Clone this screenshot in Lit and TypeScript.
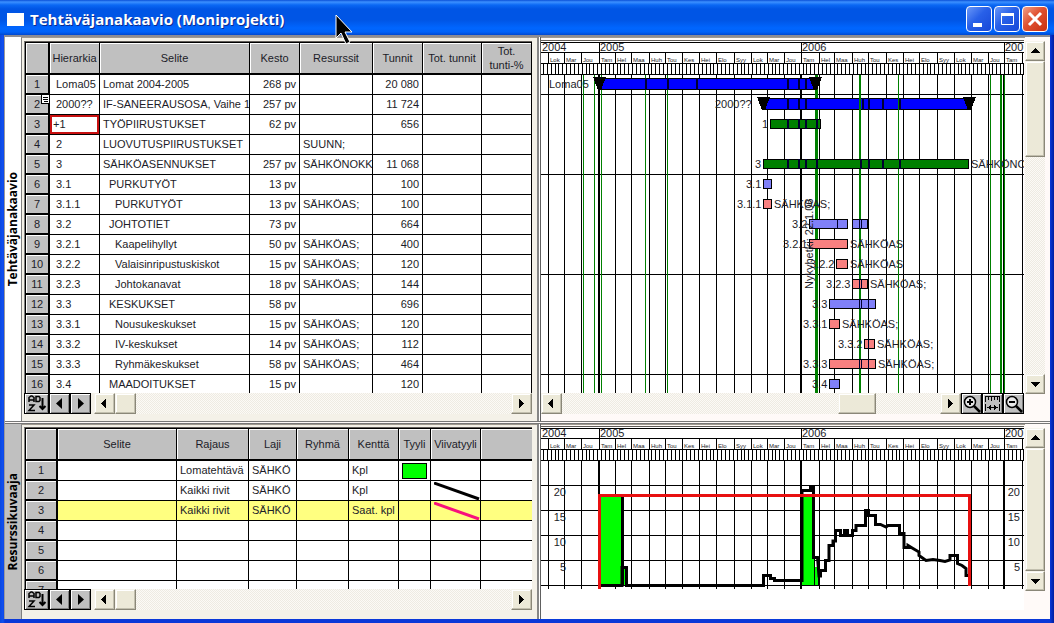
import { LitElement, html, svg, css, nothing } from "lit";
import { customElement, property } from "lit/decorators.js";
import { classMap } from "lit/directives/class-map.js";

/** Pixel column where the timeline canvas starts; chart data is stored on the same scale. */
const ORIGIN = 541;
const MONTH_LINES = [
  548, 564, 581, 599, 615, 631, 649, 665, 682, 699, 716, 734, 751, 767, 784, 801,
  819, 834, 852, 868, 886, 903, 919, 937, 954, 971, 988, 1004, 1022,
].map((x) => x - ORIGIN);
const MONTH_NAMES = ["Tam", "Hel", "Maa", "Huh", "Tou", "Kes", "Hei", "Elo", "Syy", "Lok", "Mar", "Jou"];
const YEARS = [
  { x: 0, label: "2004" },
  { x: 599 - ORIGIN, label: "2005" },
  { x: 801 - ORIGIN, label: "2006" },
  { x: 1004 - ORIGIN, label: "200" },
];
const WEEKS = Array.from({ length: 126 }, (_, i) => Math.round(2 + i * 3.874));

/** [x, width] of holiday markers. */
const HOLIDAYS: [number, number][] = [
  [583, 1], [594, 1], [601, 1], [645, 1], [667, 1], [815, 3], [859, 2], [898, 1], [990, 1], [1000, 2], [1004, 1],
];

type Task = [id: string, indent: number, name: string, duration: string, resource: string, hours: string];
const TASKS: Task[] = [
  ["Loma05", 0, "Lomat 2004-2005", "268 pv", "", "20 080"],
  ["2000??", 0, "IF-SANEERAUSOSA, Vaihe 1", "257 pv", "", "11 724"],
  ["+1", 0, "TYÖPIIRUSTUKSET", "62 pv", "", "656"],
  ["2", 0, "LUOVUTUSPIIRUSTUKSET", "", "SUUNN;", ""],
  ["3", 0, "SÄHKÖASENNUKSET", "257 pv", "SÄHKÖNOKK", "11 068"],
  ["3.1", 1, "PURKUTYÖT", "13 pv", "", "100"],
  ["3.1.1", 2, "PURKUTYÖT", "13 pv", "SÄHKÖAS;", "100"],
  ["3.2", 1, "JOHTOTIET", "73 pv", "", "664"],
  ["3.2.1", 2, "Kaapelihyllyt", "50 pv", "SÄHKÖAS;", "400"],
  ["3.2.2", 2, "Valaisinripustuskiskot", "15 pv", "SÄHKÖAS;", "120"],
  ["3.2.3", 2, "Johtokanavat", "18 pv", "SÄHKÖAS;", "144"],
  ["3.3", 1, "KESKUKSET", "58 pv", "", "696"],
  ["3.3.1", 2, "Nousukeskukset", "15 pv", "SÄHKÖAS;", "120"],
  ["3.3.2", 2, "IV-keskukset", "14 pv", "SÄHKÖAS;", "112"],
  ["3.3.3", 2, "Ryhmäkeskukset", "58 pv", "SÄHKÖAS;", "464"],
  ["3.4", 1, "MAADOITUKSET", "15 pv", "", "120"],
];

interface Bar {
  row: number;
  kind: "project" | "phase" | "summary" | "work";
  spans: [number, number][];
  ticks?: number[];
  label: string;
  labelX: number;
  after?: string;
}
const BARS: Bar[] = [
  { row: 1, kind: "project", spans: [[599, 815]], ticks: [645, 667, 696, 787, 798, 805], label: "Loma05", labelX: 549 },
  { row: 2, kind: "project", spans: [[763, 969]], ticks: [787, 798, 805, 862, 868, 882, 899], label: "2000??", labelX: 715 },
  { row: 3, kind: "phase", spans: [[770, 821]], ticks: [787, 798, 805, 816], label: "1", labelX: 762 },
  { row: 5, kind: "phase", spans: [[763, 969]], ticks: [787, 798, 805, 816, 860, 868, 882, 899], label: "3", labelX: 755, after: "SÄHKÖNO" },
  { row: 6, kind: "summary", spans: [[763, 772]], label: "3.1", labelX: 746 },
  { row: 7, kind: "work", spans: [[763, 772]], label: "3.1.1", labelX: 737, after: "SÄHKÖAS;" },
  { row: 8, kind: "summary", spans: [[809, 848], [852, 868]], ticks: [837, 859, 861], label: "3.2", labelX: 792 },
  { row: 9, kind: "work", spans: [[809, 848]], label: "3.2.1", labelX: 783, after: "SÄHKÖAS" },
  { row: 10, kind: "work", spans: [[836, 848]], label: "3.2.2", labelX: 810, after: "SÄHKÖAS" },
  { row: 11, kind: "work", spans: [[852, 868]], ticks: [859, 861], label: "3.2.3", labelX: 826, after: "SÄHKÖAS;" },
  { row: 12, kind: "summary", spans: [[829, 876]], ticks: [859, 861, 868], label: "3.3", labelX: 812 },
  { row: 13, kind: "work", spans: [[829, 840]], label: "3.3.1", labelX: 803, after: "SÄHKÖAS;" },
  { row: 14, kind: "work", spans: [[864, 875]], ticks: [868], label: "3.3.2", labelX: 838, after: "SÄHKÖAS;" },
  { row: 15, kind: "work", spans: [[829, 876]], ticks: [859, 861, 868], label: "3.3.3", labelX: 803, after: "SÄHKÖAS;" },
  { row: 16, kind: "summary", spans: [[829, 840]], label: "3.4", labelX: 812 },
];
const FILLS = { project: "#0000ff", phase: "#008000", summary: "#8080f8", work: "#f88080" };

const RESOURCE_ROWS = [
  ["Lomatehtävä", "SÄHKÖ", "Kpl", "fill"],
  ["Kaikki rivit", "SÄHKÖ", "Kpl", "black"],
  ["Kaikki rivit", "SÄHKÖ", "Saat. kpl", "pink"],
  ["", "", "", ""],
  ["", "", "", ""],
  ["", "", "", ""],
  ["", "", "", ""],
];

const controls = css`
  button {
    box-sizing: border-box;
    display: flex;
    align-items: center;
    justify-content: center;
    margin: 0;
    padding: 0;
    border: 0;
    font: inherit;
  }
`;

@customElement("scroll-bar")
class ScrollBar extends LitElement {
  @property({ type: Boolean, reflect: true }) vertical = false;
  @property({ type: Number }) before = 0;
  @property({ type: Number }) size = 20;

  static styles = [
    controls,
    css`
      :host {
        display: flex;
        min-width: 0;
        min-height: 0;
        background: repeating-conic-gradient(#eeebe2 0 25%, #fcfaf6 0 50%) 0 0 / 2px 2px;
      }
      :host([vertical]) {
        flex-direction: column;
      }
      .arrow,
      .thumb {
        flex: none;
        box-sizing: border-box;
        background: #ece9d8;
        border: 1px solid;
        border-color: #f6f4ec #8a8778 #8a8778 #f6f4ec;
        box-shadow: inset -1px -1px #c2bfae, inset 1px 1px #fff;
      }
      .arrow {
        width: 21px;
        height: 21px;
      }
      .track {
        display: flex;
        flex: 1;
        min-width: 0;
        min-height: 0;
      }
      :host([vertical]) .arrow {
        width: 20px;
        height: 20px;
      }
      :host([vertical]) .track {
        flex-direction: column;
      }
    `,
  ];

  render() {
    const dim = this.vertical ? "height" : "width";
    const paths = this.vertical ? ["M0 6h9L4.500 1z", "M0 2h9L4.500 7z"] : ["M6 0v9L1 4.500z", "M2 0v9L7 4.500z"];
    const arrow = (i: number, name: string) => html`<button class="arrow" aria-label=${name}>
      <svg width="9" height="9" shape-rendering="crispEdges"><path d=${paths[i]} /></svg>
    </button>`;
    return html`${arrow(0, "Takaisin")}
      <div class="track">
        <div style="${dim}:${this.before}%"></div>
        <div class="thumb" style="${dim}:${this.size}px"></div>
      </div>
      ${arrow(1, "Eteenpäin")}`;
  }
}

const timeHeader = () => svg`
  <g class="ink">
    <path d="M0 1.500H2000M0 11.500H2000M0 22.500H2000M0 33.500H2000" />
    ${WEEKS.map((x) => svg`<path d="M${x + 0.5} 22V33" />`)}
    ${MONTH_LINES.map((x) => svg`<path d="M${x + 0.5} 11V22" />`)}
    ${YEARS.slice(1).map((y) => svg`<path d="M${y.x + 0.5} 1V22" />`)}
  </g>
  ${YEARS.map((y) => svg`<text class="year" x=${y.x + 1} y="10">${y.label}</text>`)}
  ${MONTH_LINES.map((x, i) => svg`<text class="month" x=${x + 2} y="21">${MONTH_NAMES[(i + 9) % 12]}</text>`)}
`;

const chartStyles = css`
  :host {
    display: block;
    overflow: hidden;
    background: #fff;
  }
  svg {
    display: block;
    width: 100%;
    height: 100%;
  }
  text {
    font: 11px "Liberation Sans", Arial, sans-serif;
    fill: #1c1c28;
  }
  .year {
    font-size: 11px;
  }
  .month {
    font-size: 6px;
  }
  .ink {
    stroke: #000;
    fill: none;
    shape-rendering: crispEdges;
  }
  .shape {
    shape-rendering: crispEdges;
  }
`;

@customElement("gantt-chart")
class GanttChart extends LitElement {
  static styles = chartStyles;

  private bar(b: Bar) {
    const mid = b.row * 20 + 23;
    const half = b.kind === "project" ? 6 : 5;
    const end = b.spans[b.spans.length - 1][1] - ORIGIN;
    const start = b.spans[0][0] - ORIGIN;
    const flag = (x: number) => svg`<path d="M${x - 6} ${mid - 7}h13l-5 13h-3z" />`;
    return svg`
      <text x=${b.labelX - ORIGIN} y=${mid + 4}>${b.label}</text>
      <g class="shape">
        ${b.spans.map(([a, z]) => svg`<rect x=${a - ORIGIN + 0.5} y=${mid - half + 0.5} width=${z - a - 1} height=${half * 2 - 1} fill=${FILLS[b.kind]} stroke="#000" />`)}
        ${(b.ticks ?? []).map((t) => svg`<rect x=${t - ORIGIN} y=${mid - half} width=${half === 5 && b.kind !== "phase" ? 1 : 2} height=${half * 2} fill="#000030" />`)}
        ${b.kind === "project" ? [flag(start), flag(end)] : nothing}
      </g>
      ${b.after ? svg`<text x=${end + 2} y=${mid + 4}>${b.after}</text>` : nothing}
    `;
  }

  render() {
    return html`<svg role="img" aria-label="Tehtäväjanakaavio">
      <g class="ink">
        ${MONTH_LINES.map((x) => svg`<path d="M${x + 0.5} 33V2000" />`)}
        ${YEARS.slice(1).map((y) => svg`<path d="M${y.x} 33V2000" stroke-width="2" />`)}
        ${[53, 133, 233, 333].map((y) => svg`<path d="M0 ${y + 0.5}H2000" />`)}
      </g>
      <g class="shape">
        ${HOLIDAYS.map(([x, w]) => svg`<rect x=${x - ORIGIN} y="34" width=${w} height="2000" fill="#008000" />`)}
      </g>
      ${BARS.map((b) => this.bar(b))}
      <text transform="translate(272 248) rotate(-90)">Nykyhetki: 22.1.06</text>
      <g class="shape">
        <rect x="318" y="57" width="2" height="12" fill="#008000" />
        <rect x="357" y="57" width="1" height="12" fill="#008000" />
      </g>
      ${timeHeader()}
    </svg>`;
  }
}

/** Resource load curve, one vertex per change. */
const LOAD =
  "M601 585.500H622V567.500H626.500V585.500H763.500V575.500H770.500V578.500H774.500V580.500H802V490.500H810.500V486.500H813.500V557.500H817.500L819 576H820.500V570.500H825.500V560.500H829V545.500H833V541H835.500V530.500H840.500V535.500H844.500V530.500H847.500V535.500H852.500V530.500H856V525.500H865.500V510.500H868.500V515.500H875.500V524.500H880.500L886 527L888 525.500H899.500V533.500H904V547.500H908V545.500L913 548.500L919 552V555.500L926 560.500L933 559.500L940 560.500L945 561.500L950 560V555.500H957.500V563.500L962 565.500L966 568.500V575.500H969";

@customElement("load-chart")
class LoadChart extends LitElement {
  static styles = [
    chartStyles,
    css`
      .limit {
        fill: none;
        stroke: #e81010;
        stroke-width: 3;
      }
      .curve {
        fill: none;
        stroke: #000;
        stroke-width: 3;
      }
      .scale {
        text-anchor: end;
      }
    `,
  ];

  render() {
    return html`<svg role="img" aria-label="Resurssikuvaaja">
      <g class="ink">
        ${MONTH_LINES.map((x) => svg`<path d="M${x + 0.5} 33V162" />`)}
        ${YEARS.slice(1).map((y) => svg`<path d="M${y.x} 33V162" stroke-width="2" />`)}
        ${[58, 83, 108, 133, 158].map((y) => svg`<path d="M0 ${y + 0.5}H2000" />`)}
      </g>
      <g class="shape" transform="translate(-541 -427)">
        <path d="M600 495h22v90h-22zM802 495h12v90h-12zM814 567h4v18h-4zM623 569h3v16h-3z" fill="#00ff00" />
        <path d="M600 585.500H627M802 585.500H819M814.500 495V585M818.500 567V585" stroke="#000" fill="none" />
        <path d="M622.500 495V586" stroke="#000" stroke-width="3" />
        <path class="limit" d="M599.500 589V495.500H969.500V586" />
      </g>
      <path class="curve" transform="translate(-541 -427)" d=${LOAD} />
      <path class="limit shape" transform="translate(-541 -427)" d="M601 495.500H969.500V586" />
      ${[20, 15, 10, 5].map(
        (n, i) => svg`
          <text class="scale" x="25" y=${69 + i * 25}>${n}</text>
          <text class="scale" x="479" y=${69 + i * 25}>${n}</text>`,
      )}
      ${timeHeader()}
    </svg>`;
  }
}

const magnifier = (plus: boolean) => svg`
  <circle cx="7" cy="7" r="5.500" fill="#e8e8e8" stroke="#000" stroke-width="1.500" />
  <path d="M4 7h6" stroke="#000" stroke-width="2" />
  ${plus ? svg`<path d="M7 4v6" stroke="#000" stroke-width="2" />` : nothing}
  <path d="M11 11l6 6" stroke="#000" stroke-width="2.500" />
`;

@customElement("app-root")
class AppRoot extends LitElement {
  static styles = [
    controls,
    css`
      :host {
        display: block;
        font: 11px/14px "Liberation Sans", Arial, sans-serif;
        color: #1c1c28;
      }
      .window {
        display: flex;
        flex-direction: column;
        box-sizing: border-box;
        height: 100vh;
        padding: 0 4px 4px;
        background: linear-gradient(90deg, #0a48e0, #1050f0 3px, #0a38d8 5px, #0a38d8 calc(100% - 4px), #001ea0);
        overflow: hidden;
        position: relative;
      }
      .titlebar {
        flex: none;
        display: flex;
        align-items: center;
        box-sizing: border-box;
        height: 35px;
        margin: 0 -4px;
        padding: 3px 6px 0 7px;
        gap: 6px;
        background: linear-gradient(#0a50d8 0, #3c90ff 2px, #0a68f4 5px, #0055e5 9px, #0055e5 20px, #0066ff 28px, #0062f8 32px, #0048d0 35px);
      }
      .app-icon {
        width: 17px;
        height: 13px;
        background: #fff;
      }
      h1 {
        flex: 1;
        margin: 0;
        font: bold 15px/20px "Open Sans", sans-serif;
        color: #fff;
        text-shadow: 1px 1px #0a2a90;
      }
      .captions {
        display: flex;
        gap: 2px;
      }
      .caption {
        width: 26px;
        height: 26px;
        border: 1px solid #fff;
        border-radius: 4px;
        background: linear-gradient(135deg, #6a98f8, #2860e8 45%, #1848d8);
      }
      .caption.close {
        background: linear-gradient(135deg, #f0a088, #e05030 45%, #c83010);
      }
      .client {
        flex: 1;
        display: flex;
        flex-direction: column;
        min-height: 0;
        box-sizing: border-box;
        border-top: 2px solid #8c8c94;
        border-left: 1px solid #9a9a9a;
        background: #fffaf8;
      }
      .pane {
        display: grid;
        grid-template-columns: 16px 516px 4px minmax(0, 1fr) 21px;
        padding-right: 4px;
        min-height: 0;
      }
      .pane.tasks {
        flex: 1;
      }
      .pane.resources {
        flex: none;
        height: 195px;
        border-top: 3px double #777;
      }
      .side {
        display: flex;
        align-items: center;
        justify-content: center;
        margin: 0;
        background: #fff;
        font: bold 12px/16px "Open Sans", sans-serif;
        color: #000;
      }
      .side span {
        writing-mode: vertical-rl;
        transform: rotate(180deg);
      }
      .resources .side {
        background: #c0c0c0;
      }
      .sheet {
        display: flex;
        flex-direction: column;
        min-height: 0;
        box-sizing: border-box;
        border-left: 1px solid #808080;
        border-top: 1px solid #a09a90;
        padding: 3px 5px 7px 2px;
        background: #f4f1e8;
      }
      .resources .sheet {
        padding: 2px 5px 9px 2px;
      }
      .grid {
        flex: 1;
        min-height: 0;
        overflow: hidden;
        background: #fff;
        border-left: 1px solid #808080;
        border-top: 1px solid #605c58;
      }
      .split {
        border-left: 2px solid #868686;
        border-right: 1px solid #606060;
        background: #fff;
      }
      .chart {
        display: flex;
        flex-direction: column;
        min-height: 0;
        box-sizing: border-box;
        padding: 2px 1px 7px 0;
        border-top: 1px solid #a09a90;
      }
      .resources .chart {
        padding: 1px 1px 9px 0;
      }
      .canvas {
        flex: 1;
        min-height: 0;
        border-top: 1px solid #605c58;
      }
      .resources .canvas {
        border-bottom: 21px solid #fff;
      }
      .vbar {
        padding: 4px 0 27px;
        display: flex;
      }
      .resources .vbar {
        padding: 4px 0 28px;
      }
      .row {
        flex: none;
        display: flex;
        height: 21px;
      }
      .row scroll-bar {
        flex: 1;
      }
      .tool {
        flex: none;
        width: 21px;
        height: 21px;
        background: #c0c0c0;
        border: 1px solid #000;
        box-shadow: inset 1px 1px #fff, inset -1px -1px #808080;
      }
      .tool.sort {
        width: 25px;
      }
      .row .nav + scroll-bar {
        margin-left: 3px;
      }
      table {
        table-layout: fixed;
        border-collapse: separate;
        border-spacing: 0;
        width: 507px;
      }
      th,
      td {
        box-sizing: border-box;
        height: 20px;
        padding: 0 3px 2px;
        border-right: 1px solid #000;
        border-bottom: 1px solid #000;
        font-weight: normal;
        white-space: nowrap;
        overflow: hidden;
        text-align: left;
      }
      th {
        padding-bottom: 0;
        background: #c0c0c0;
        text-align: center;
        box-shadow: inset 1px 1px #fff;
      }
      thead th {
        height: 33px;
        padding: 0;
        border-top: 1px solid #000;
        border-bottom-width: 2px;
        white-space: normal;
      }
      th:first-child {
        border-left: 1px solid #000;
        border-right-width: 2px;
        border-bottom-width: 2px;
      }
      .num {
        text-align: right;
      }
      .code {
        padding-left: 6px;
      }
      .indent-1 {
        padding-left: 9px;
      }
      .indent-2 {
        padding-left: 15px;
      }
      .edit {
        padding: 0;
      }
      .edit input {
        display: block;
        box-sizing: border-box;
        width: 100%;
        height: 19px;
        margin: 0;
        padding: 0 1px 2px;
        border: 2px solid #c81010;
        border-radius: 0;
        outline: 0;
        background: #fff;
        color: inherit;
        font: inherit;
      }
      .selected td {
        background: #ffff80;
      }
      .blank-end {
        border-right: 0;
      }
      .drawn {
        padding: 0 0 0 3px;
      }
      .swatch {
        display: block;
        width: 23px;
        height: 14px;
        border: 1px solid #000;
        background: #00ff00;
      }
      .drawn svg {
        display: block;
      }
      .note {
        position: absolute;
        left: 41px;
        top: 94px;
      }
      .cursor {
        position: absolute;
        left: 334px;
        top: 13px;
      }
    `,
  ];

  private widths(list: number[]) {
    return html`<colgroup>
      ${list.map((w) => html`<col style="width:${w}px" />`)}
    </colgroup>`;
  }

  private navRow() {
    return html`<div class="row">
      <button class="tool sort" aria-label="Lajittele">
        <svg width="20" height="17" fill="none" stroke="#000" stroke-width="1.500">
          <path d="M2 7V2.500L4 1h1l2 1.500V7M2 5h5M2 10h5L2 15.500h6M9 1.500h3l1 1v3l-1 1H9z" />
          <path d="M15.500 3v11M12.500 11l3 3 3-3" stroke-width="2" />
        </svg>
      </button>
      <button class="tool nav" aria-label="Edellinen">
        <svg width="9" height="11"><path d="M7 0v11L1 5.500z" /></svg>
      </button>
      <button class="tool nav" aria-label="Seuraava">
        <svg width="9" height="11"><path d="M2 0v11L8 5.500z" /></svg>
      </button>
      <scroll-bar .before=${0} .size=${21}></scroll-bar>
    </div>`;
  }

  private taskTable() {
    return html`<table>
      ${this.widths([25, 50, 150, 50, 73, 50, 59, 50])}
      <thead>
        <tr>
          <th></th>
          ${["Hierarkia", "Selite", "Kesto", "Resurssit", "Tunnit", "Tot. tunnit"].map((t) => html`<th>${t}</th>`)}
          <th>Tot.<br />tunti-%</th>
        </tr>
      </thead>
      <tbody>
        ${TASKS.map(
          ([id, indent, name, duration, resource, hours], i) => html`<tr>
            <th>${i + 1}</th>
            ${id === "+1"
              ? html`<td class="edit"><input aria-label="Hierarkia" .value=${id} /></td>`
              : html`<td class="code">${id}</td>`}
            <td class=${classMap({ "indent-1": indent === 1, "indent-2": indent === 2 })}>${name}</td>
            <td class="num">${duration}</td>
            <td>${resource}</td>
            <td class="num">${hours}</td>
            <td></td>
            <td></td>
          </tr>`,
        )}
      </tbody>
    </table>`;
  }

  private resourceTable() {
    return html`<table>
      ${this.widths([33, 119, 72, 48, 52, 50, 32, 50, 51])}
      <thead>
        <tr>
          <th></th>
          ${["Selite", "Rajaus", "Laji", "Ryhmä", "Kenttä", "Tyyli", "Viivatyyli"].map((t) => html`<th>${t}</th>`)}
          <th class="blank-end"></th>
        </tr>
      </thead>
      <tbody>
        ${RESOURCE_ROWS.map(
          ([filter, kind, field, style], i) => html`<tr class=${classMap({ selected: i === 2 })}>
            <th>${i + 1}</th>
            <td></td>
            <td>${filter}</td>
            <td>${kind}</td>
            <td></td>
            <td>${field}</td>
            <td class="drawn">${style === "fill" ? html`<span class="swatch"></span>` : nothing}</td>
            <td class="drawn">
              ${style === "black" || style === "pink"
                ? html`<svg width="46" height="18">
                    <path d="M0 1L45 17" stroke=${style === "pink" ? "#f8107c" : "#000"} stroke-width="3" />
                  </svg>`
                : nothing}
            </td>
            <td class="blank-end"></td>
          </tr>`,
        )}
      </tbody>
    </table>`;
  }

  render() {
    return html`<div class="window">
      <header class="titlebar">
        <span class="app-icon"></span>
        <h1>Tehtäväjanakaavio (Moniprojekti)</h1>
        <div class="captions">
          <button class="caption" aria-label="Pienennä">
            <svg width="20" height="20"><path d="M4 14h9v4H4z" fill="#fff" /></svg>
          </button>
          <button class="caption" aria-label="Suurenna">
            <svg width="20" height="20" fill="none" stroke="#fff"><path d="M4.500 4.500h12v11h-12z" /><path d="M4 5.500h13" stroke-width="3" /></svg>
          </button>
          <button class="caption close" aria-label="Sulje">
            <svg width="20" height="20"><path d="M4 4l12 12M16 4L4 16" stroke="#fff" stroke-width="3" /></svg>
          </button>
        </div>
      </header>
      <main class="client">
        <section class="pane tasks">
          <h2 class="side"><span>Tehtäväjanakaavio</span></h2>
          <div class="sheet">
            <div class="grid">${this.taskTable()}</div>
            ${this.navRow()}
          </div>
          <div class="split"></div>
          <div class="chart">
            <gantt-chart class="canvas"></gantt-chart>
            <div class="row">
              <scroll-bar .before=${73} .size=${38}></scroll-bar>
              <button class="tool" aria-label="Lähennä"><svg width="18" height="18">${magnifier(true)}</svg></button>
              <button class="tool" aria-label="Sovita">
                <svg width="17" height="17" fill="none" stroke="#000" shape-rendering="crispEdges">
                  <path d="M1.500 7V1.500H15.500V7M4.500 1V5M7.500 1V6M10.500 1V5M13.500 1V5M1.500 9V16M15.500 9V16" />
                  <path d="M3 12.500H14M6.500 10V15M10.500 10V15M5.500 11V14M11.500 11V14" />
                </svg>
              </button>
              <button class="tool" aria-label="Loitonna"><svg width="18" height="18">${magnifier(false)}</svg></button>
            </div>
          </div>
          <div class="vbar"><scroll-bar vertical .before=${0} .size=${96}></scroll-bar></div>
        </section>
        <section class="pane resources">
          <h2 class="side"><span>Resurssikuvaaja</span></h2>
          <div class="sheet">
            <div class="grid">${this.resourceTable()}</div>
            ${this.navRow()}
          </div>
          <div class="split"></div>
          <div class="chart">
            <load-chart class="canvas"></load-chart>
          </div>
          <div class="vbar"><scroll-bar vertical .before=${0} .size=${123}></scroll-bar></div>
        </section>
      </main>
      <svg class="note" width="9" height="10" shape-rendering="crispEdges">
        <path d="M.5.5h8v9h-8z" fill="#fff" stroke="#000" />
        <path d="M2 3.500h5M2 5.500h5M3 7.500h4" stroke="#000" />
      </svg>
      <svg class="cursor" width="22" height="34">
        <path d="M2 2V25L7 20L12 31L16 29L11 19H18Z" stroke="#fff" />
      </svg>
    </div>`;
  }
}
